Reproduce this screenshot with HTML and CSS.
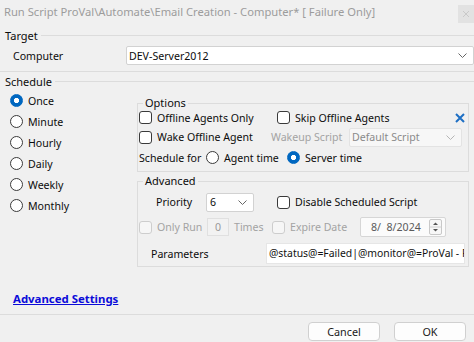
FILE: index.html
```html
<!DOCTYPE html>
<html lang="en">
<head>
    <meta charset="UTF-8">
    <title>Run Script</title>
    <link rel="stylesheet" href="styles.css">
</head>
<body>

    <!-- Title bar -->
    <div class="titlebar">
        <span class="title">Run Script ProVal\Automate\Email Creation - Computer* [ Failure Only]</span>
        <span class="title-close">
            <svg width="8" height="8" viewBox="0 0 8 8"><path d="M1 1L7 7M7 1L1 7" stroke="#c9c9c9" stroke-width="1"/></svg>
        </span>
    </div>

    <!-- Target -->
    <div class="legend-row"><span class="legend-text">Target</span><span class="rule"></span></div>
    <div class="computer-row">
        <span class="computer-label">Computer</span>
        <div class="combo combo-wide">
            <span>DEV-Server2012</span>
            <svg class="chev" width="9" height="5" viewBox="0 0 9 5"><path d="M0.5 0.5L4.5 4.5L8.5 0.5" fill="none" stroke="#666"/></svg>
        </div>
    </div>
    <div class="divider"></div>

    <!-- Schedule -->
    <div class="legend-row schedule-legend"><span class="legend-text">Schedule</span><span class="rule"></span></div>

    <div class="schedule-body">
        <div class="freq-list">
            <div class="radio-item"><span class="radio checked"></span>Once</div>
            <div class="radio-item"><span class="radio"></span>Minute</div>
            <div class="radio-item"><span class="radio"></span>Hourly</div>
            <div class="radio-item"><span class="radio"></span>Daily</div>
            <div class="radio-item"><span class="radio"></span>Weekly</div>
            <div class="radio-item"><span class="radio"></span>Monthly</div>
        </div>

        <div class="groups">
            <fieldset class="group options">
                <legend>Options</legend>
                <div class="row row-a">
                    <div class="check-item w-offline"><span class="check"></span>Offline Agents Only</div>
                    <div class="check-item"><span class="check"></span>Skip Offline Agents</div>
                    <svg class="clear-x" width="10" height="10" viewBox="0 0 10 10"><path d="M1 1L9 9M9 1L1 9" stroke="#1e6fc4" stroke-width="2"/></svg>
                </div>
                <div class="row row-b">
                    <div class="check-item w-wake"><span class="check"></span>Wake Offline Agent</div>
                    <span class="muted w-wakeup">Wakeup Script</span>
                    <div class="combo combo-script">
                        <span>Default Script</span>
                        <svg class="chev" width="9" height="5" viewBox="0 0 9 5"><path d="M0.5 0.5L4.5 4.5L8.5 0.5" fill="none" stroke="#b5b5b5"/></svg>
                    </div>
                </div>
                <div class="row row-c">
                    <span class="w-schedfor">Schedule for</span>
                    <div class="radio-item inline w-agent"><span class="radio"></span>Agent time</div>
                    <div class="radio-item inline"><span class="radio checked"></span>Server time</div>
                </div>
            </fieldset>

            <fieldset class="group advanced">
                <legend>Advanced</legend>
                <div class="row row-d">
                    <span class="priority-label">Priority</span>
                    <div class="combo combo-priority">
                        <span>6</span>
                        <svg class="chev" width="9" height="5" viewBox="0 0 9 5"><path d="M0.5 0.5L4.5 4.5L8.5 0.5" fill="none" stroke="#666"/></svg>
                    </div>
                    <div class="check-item"><span class="check"></span>Disable Scheduled Script</div>
                </div>
                <div class="row row-e">
                    <div class="check-item muted w-onlyrun"><span class="check disabled"></span>Only Run</div>
                    <span class="numbox">0</span>
                    <span class="muted w-times">Times</span>
                    <div class="check-item muted w-expire"><span class="check disabled"></span>Expire Date</div>
                    <div class="datebox">
                        <span>8/&nbsp;&nbsp;8/2024</span>
                        <svg class="spin" width="13" height="16" viewBox="0 0 13 16">
                            <rect x="0.5" y="0.5" width="12" height="15" rx="1.5" fill="#f7f7f7" stroke="#c8c8c8"/>
                            <path d="M0.5 8H12.5" stroke="#d0d0d0"/>
                            <path d="M4 6L6.5 3.5L9 6Z" fill="#555"/>
                            <path d="M4 10L6.5 12.5L9 10Z" fill="#555"/>
                        </svg>
                    </div>
                </div>
                <div class="row row-f">
                    <span class="params-label">Parameters</span>
                    <div class="params-box">@status@=Failed|@monitor@=ProVal - F</div>
                </div>
            </fieldset>
        </div>
    </div>

    <div class="link-row"><a href="#" class="adv-link">Advanced Settings</a></div>
    <div class="divider footer-rule"></div>
    <div class="footer">
        <button class="btn">Cancel</button>
        <button class="btn">OK</button>
    </div>

</body>
</html>
```

FILE: styles.css
```css
body {
    margin: 0;
    width: 474px;
    height: 342px;
    overflow: hidden;
    background-color: #f0f0f0;
    font-family: 'Noto Sans', 'Open Sans', sans-serif;
    font-size: 10.6px;
    color: #0c0c0c;
    white-space: nowrap;
}

/* title bar */
.titlebar {
    height: 25px;
    display: flex;
    justify-content: space-between;
    align-items: flex-start;
}

.title {
    padding-left: 4px;
    line-height: 24px;
    font-size: 11.2px;
    color: #9c9c9c;
}

.title-close {
    margin-top: 5px;
    width: 16px;
    height: 18px;
    background-color: #e2e2e2;
    display: flex;
    justify-content: center;
    align-items: center;
}

/* group headers (Target / Schedule) */
.legend-row {
    height: 20px;
    display: flex;
    align-items: center;
    font-size: 11px;
}

.legend-text {
    padding-left: 5px;
    padding-right: 3px;
}

.rule {
    flex: 1;
    border-top: 1px solid #dcdcdc;
}

.schedule-legend {
    height: 18px;
}

.divider {
    margin-top: 6px;
    border-top: 1px solid #dcdcdc;
}

.computer-row {
    margin-top: 1px;
    display: flex;
    align-items: center;
    height: 19px;
}

.computer-label {
    padding-left: 13px;
    width: 113px;
}

/* combo boxes */
.combo {
    box-sizing: border-box;
    height: 19px;
    display: flex;
    align-items: center;
    justify-content: space-between;
    padding: 0 6px 0 2px;
    background-color: #fff;
    border: 1px solid #d2d2d2;
    border-radius: 2px;
    flex: none;
}

.combo-wide { width: 348px; }

.combo-script {
    width: 113px;
    background-color: #f7f7f7;
    border-color: #e3e3e3;
    color: #8a8a8a;
}

.combo-priority {
    width: 48px;
    margin-right: 23px;
    padding-left: 3px;
}

/* schedule area */
.schedule-body {
    display: flex;
}

.freq-list {
    width: 137px;
    box-sizing: border-box;
    padding-left: 10px;
}

.radio-item {
    height: 21px;
    display: flex;
    align-items: center;
}

.radio-item.inline { height: auto; }

.radio {
    box-sizing: border-box;
    width: 13px;
    height: 13px;
    border: 1px solid #3a3a3a;
    border-radius: 50%;
    background-color: #fff;
    margin-right: 5px;
    flex: none;
}

.radio.checked {
    border-color: #0067c0;
    background: radial-gradient(circle, #fff 0 2.4px, #0067c0 2.9px);
}

.groups {
    width: 332px;
    padding-top: 8px;
}

.group {
    box-sizing: border-box;
    width: 332px;
    margin: 0;
    padding: 0 0 3px 1px;
    border: 1px solid #dcdcdc;
}

.group legend {
    line-height: 10px;
    padding: 0 2px;
    margin-left: 4px;
    font-size: 11px;
}

.advanced {
    margin-top: 4px;
    padding-bottom: 2px;
}

.row {
    display: flex;
    align-items: center;
}

.row > * { flex: none; }

.row-a { height: 19px; }
.row-b { height: 20px; }
.row-c { height: 21px; }
.row-d { height: 20px; margin-top: 6px; }
.row-e { height: 20px; margin-top: 5px; }
.row-f { height: 21px; margin-top: 6px; }

.check-item {
    display: flex;
    align-items: center;
}

.check {
    box-sizing: border-box;
    width: 13px;
    height: 13px;
    border: 1px solid #3a3a3a;
    border-radius: 3px;
    background-color: #fff;
    margin-right: 5px;
    flex: none;
}

.check.disabled {
    border-color: #cdcdcd;
    background-color: #f6f6f6;
}

.muted { color: #a3a3a3; }

.w-offline { width: 138px; }
.w-wake { width: 132px; }
.w-wakeup { width: 78px; }
.w-schedfor { width: 67px; }
.w-agent { width: 81px; }
.w-onlyrun { width: 68px; }
.w-times { width: 38px; margin-left: 5px; }
.w-expire { width: 88px; }

.clear-x {
    margin-left: auto;
    margin-right: 3px;
}

.priority-label {
    width: 50px;
    padding-left: 17px;
}

.numbox {
    box-sizing: border-box;
    width: 22px;
    height: 18px;
    border: 1px solid #e0e0e0;
    background-color: #f2f2f2;
    color: #9a9a9a;
    display: flex;
    align-items: center;
    justify-content: center;
}

.datebox {
    box-sizing: border-box;
    width: 86px;
    height: 20px;
    border: 1px solid #d6d6d6;
    border-radius: 2px;
    background-color: #fbfbfb;
    color: #5a5a5a;
    display: flex;
    align-items: center;
    justify-content: space-between;
    padding: 0 3px 0 10px;
}

.params-label {
    width: 115px;
    padding-left: 12px;
}

.params-box {
    box-sizing: border-box;
    width: 199px;
    height: 21px;
    line-height: 19px;
    padding-left: 2px;
    font-size: 10.4px;
    background-color: #fff;
    border: 1px solid #e6e6e6;
    overflow: hidden;
    color: #111;
}

/* bottom */
.link-row {
    margin-top: 24px;
    height: 16px;
    line-height: 16px;
    padding-left: 13px;
}

.adv-link {
    color: #0b0bd9;
    font-size: 11.4px;
    font-weight: bold;
    text-decoration: underline;
}

.footer-rule {
    margin-top: 7px;
}

.footer {
    display: flex;
    justify-content: flex-end;
    gap: 14px;
    padding: 7px 8px 0 0;
}

.btn {
    width: 72px;
    height: 19px;
    padding: 0;
    font-family: inherit;
    font-size: 10.8px;
    color: #1a1a1a;
    background-color: #fdfdfd;
    border: 1px solid #d0d0d0;
    border-radius: 4px;
}
```
